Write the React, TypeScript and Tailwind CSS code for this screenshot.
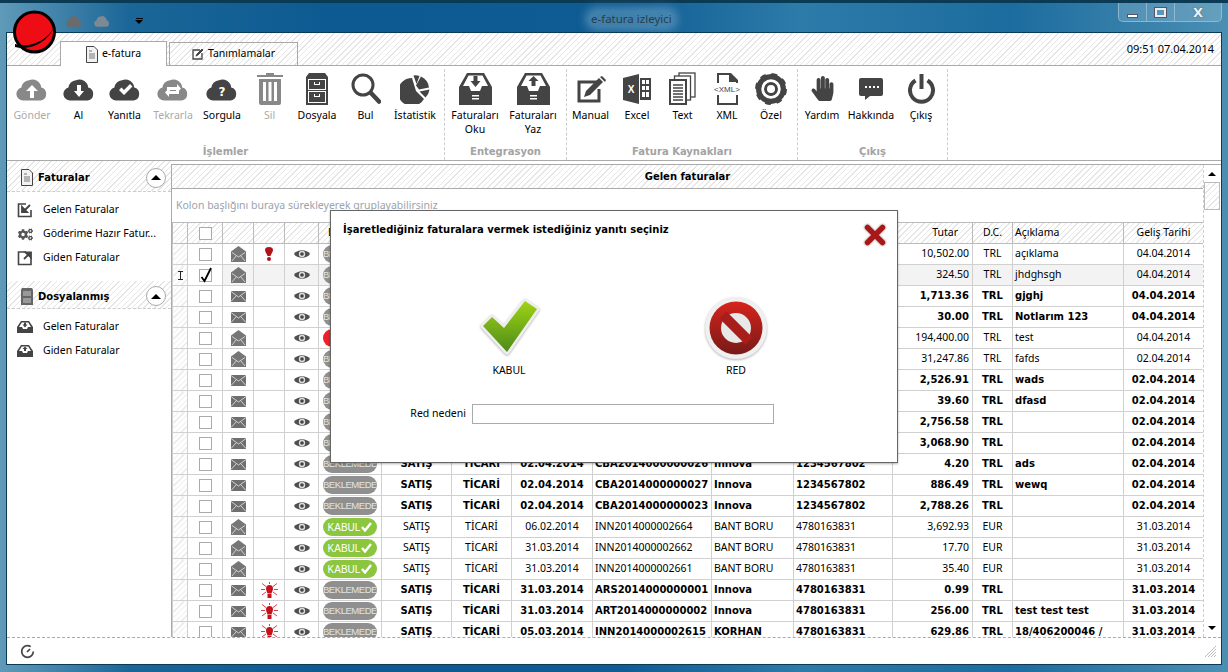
import type { ReactNode } from "react";
import { FaCogs, FaHandPaper } from "react-icons/fa";

const hatch =
  "bg-[repeating-linear-gradient(135deg,#ffffff_0px,#ffffff_3px,#e6e6e6_3px,#e6e6e6_4px)]";
const boldCell = "font-['DejaVu_Sans',sans-serif] font-bold text-[10px]";

type Icon = ReactNode;

function Cloud({ children, w = 32, h = 24 }: { children?: ReactNode; w?: number; h?: number }) {
  return (
    <svg width={w} height={h} viewBox="0 0 32 24" fill="currentColor">
      <path d="M7 23.5a6.600 6.600 0 0 1-1.600-13A8.200 8.200 0 0 1 13 3.200 8.500 8.500 0 0 1 23.500 6a7 7 0 0 1 1.700 4.600 6.600 6.600 0 0 1-.5 12.900z" />
      {children}
    </svg>
  );
}

const ArrowUpGlyph = <path d="M16 8l6 6h-4v7h-4v-7h-4z" fill="#fff" />;
const ArrowDownGlyph = <path d="M14 8h4v6h3l-5 6-5-6h3z" fill="#fff" />;

function Trash() {
  return (
    <svg width="28" height="32" viewBox="0 0 28 32" fill="currentColor">
      <path d="M10 0h8v2h9v2H1V2h9z" />
      <path fillRule="evenodd" d="M3 6h22v24a2 2 0 0 1-2 2H5a2 2 0 0 1-2-2zM7 9v19h3V9zm5.500 0v19h3V9zM18 9v19h3V9z" />
    </svg>
  );
}

function Cabinet() {
  return (
    <svg width="24" height="32" viewBox="0 0 24 32" fill="currentColor">
      <path d="M4 0h16l3 4v28H1V4z" />
      <rect x="3" y="6" width="18" height="11" fill="#fff" />
      <rect x="4" y="7" width="16" height="9" />
      <rect x="3" y="18" width="18" height="12" fill="#fff" />
      <rect x="4" y="19" width="16" height="10" />
      <path d="M9 9v3h6V9h-1v2h-4V9zM9 21v3h6v-3h-1v2h-4v-2z" fill="#fff" />
    </svg>
  );
}

function Magnifier() {
  return (
    <svg width="30" height="31" viewBox="0 0 30 31" fill="none" stroke="currentColor">
      <circle cx="12" cy="12" r="10" strokeWidth="3" />
      <path d="M20 20l8 8.500" strokeWidth="4.500" strokeLinecap="round" />
    </svg>
  );
}

function Pie() {
  return (
    <svg width="30" height="30" viewBox="0 0 30 30" fill="currentColor">
      <path d="M12 4l4 13 8 8A14 14 0 1 1 12 4z" />
      <path d="M13.500 1.500a14 14 0 0 1 6 .5l-3 8z" />
      <path d="M21 2.500a14 14 0 0 1 8 11l-10 2-3-4z" />
      <path d="M29.500 15.500a14 14 0 0 1-4 8l-6-6z" />
    </svg>
  );
}

function Tray({ up }: { up?: boolean }) {
  return (
    <svg width="33" height="32" viewBox="0 0 33 32" fill="currentColor">
      <path fillRule="evenodd" d="M8 0h17l8 14v18H0V14zM9.500 2.500L4 13h6l2 5h9l2-5h6L23.500 2.500z" />
      <rect x="13" y="22" width="7" height="1.500" fill="#fff" />
      <rect x="13" y="25" width="7" height="1.500" fill="#fff" />
      {up ? <path d="M16.500 3l5 5h-3v5h-4V8h-3z" /> : <path d="M14.500 3h4v5h3l-5 6-5-6h3z" />}
    </svg>
  );
}

function ManualIcon() {
  return (
    <svg width="32" height="28" viewBox="0 0 32 28" fill="none" stroke="currentColor">
      <path d="M22 7H4v19h20V14" strokeWidth="3" />
      <path d="M9 22l2-6L24 3l4 4-13 13z" fill="currentColor" stroke="none" />
      <path d="M25 2l2-1 4 4-1 2z" fill="currentColor" stroke="none" />
    </svg>
  );
}

function ExcelIcon() {
  return (
    <svg width="28" height="30" viewBox="0 0 28 30" fill="currentColor">
      <path d="M0 4l16-4v30L0 26z" />
      <text x="8" y="19" fill="#fff" fontSize="10" fontWeight="700" textAnchor="middle" fontFamily="Liberation Sans">X</text>
      <path fillRule="evenodd" d="M17 4h11v22H17zm2 2v4h3V6zm4 0v4h3V6zm-4 6v4h3v-4zm4 0v4h3v-4zm-4 6v5h3v-5zm4 0v5h3v-5z" />
    </svg>
  );
}

function TextIcon() {
  return (
    <svg width="27" height="33" viewBox="0 0 27 33" fill="#fff" stroke="currentColor" strokeWidth="1.300">
      <rect x="10" y="1" width="16" height="24" />
      <rect x="5.500" y="4" width="16" height="24" />
      <rect x="1" y="8" width="16" height="24" strokeWidth="2" />
      <path d="M4 13h10M4 16h10M4 19h10M4 22h10M4 25h10M4 28h10" strokeWidth="1.400" />
    </svg>
  );
}

function XmlIcon() {
  return (
    <svg width="26" height="32" viewBox="0 0 26 32" fill="currentColor">
      <path fillRule="evenodd" d="M3 0h14l7 7v25H3zm2 2v28h17V9h-7V2z" />
      <rect x="0" y="10" width="26" height="12" fill="#fff" />
      <text x="13" y="19" fontSize="8" textAnchor="middle" fontFamily="Liberation Sans">{"<XML>"}</text>
    </svg>
  );
}

function Gear() {
  return (
    <svg width="32" height="32" viewBox="0 0 32 32" fill="none" stroke="currentColor">
      <circle cx="16" cy="16" r="12" strokeWidth="6" />
      <circle cx="16" cy="16" r="14" strokeWidth="4" strokeDasharray="5.500 5.500" />
      <circle cx="16" cy="16" r="5.500" strokeWidth="3" />
      <circle cx="16" cy="16" r="8.500" stroke="#fff" strokeWidth="2.500" />
    </svg>
  );
}

function Bubble() {
  return (
    <svg width="24" height="22" viewBox="0 0 24 22" fill="currentColor">
      <path d="M2 0h20a2 2 0 0 1 2 2v14a2 2 0 0 1-2 2H11l-5 4v-4H2a2 2 0 0 1-2-2V2a2 2 0 0 1 2-2z" />
      <path d="M6 8h2v2H6zM10 8h2v2h-2zM14 8h2v2h-2zM18 8h2v2h-2z" fill="#fff" />
    </svg>
  );
}

function Power() {
  return (
    <svg width="27" height="30" viewBox="0 0 27 30" fill="none" stroke="currentColor" strokeWidth="4">
      <path d="M13.500 0v15" />
      <path d="M7.500 6.500a11.500 11.500 0 1 0 12 0" />
    </svg>
  );
}

function DocIcon() {
  return (
    <svg width="12" height="17" viewBox="0 0 12 17" fill="none" stroke="#444" strokeWidth="1">
      <path d="M1 .5h7L11.500 4v12.500H.5V.5z" fill="#f2f2f2" />
      <path d="M3 5h3M3 8h6M3 10h6M3 12h6" stroke="#777" />
    </svg>
  );
}

function SmallCabinet() {
  return (
    <svg width="12" height="17" viewBox="0 0 12 17" fill="#666">
      <path d="M1 0h10l1 2v15H0V2z" />
      <rect x="2" y="3" width="8" height="5" fill="#999" />
      <rect x="2" y="10" width="8" height="5" fill="#999" />
    </svg>
  );
}

function InOutBox({ out }: { out?: boolean }) {
  return (
    <svg width="16" height="16" viewBox="0 0 16 16" fill="none" stroke="#444">
      <path d="M9 2H1.500v12.500H14V8" strokeWidth="1.600" />
      {out ? (
        <path d="M7 9l5-5M8.500 2.500h5.500v5z" fill="#444" strokeWidth="1.800" />
      ) : (
        <path d="M13 3L8 8M5 5v5h5z" fill="#444" strokeWidth="1.800" />
      )}
    </svg>
  );
}

function SmallTray({ up }: { up?: boolean }) {
  return (
    <svg width="16" height="12" viewBox="0 0 16 12" fill="#444">
      <path fillRule="evenodd" d="M4 0h8l4 6v6H0V6zm.800 1.500L2 6h3l1 2h4l1-2h3l-2.800-4.500z" />
      {up ? <path d="M8 1.500L10.500 4H9v2H7V4H5.500z" /> : <path d="M7 1.500h2v2h1.500L8 6.500 5.500 3.500H7z" />}
    </svg>
  );
}

function CollapseButton() {
  return (
    <span className="flex h-[20px] w-[20px] items-center justify-center rounded-full border border-[#aaa] bg-white">
      <span className="h-0 w-0 border-x-[5px] border-b-[5px] border-x-transparent border-b-black" />
    </span>
  );
}

function ClosedEnvelope() {
  return (
    <svg width="15" height="11" viewBox="0 0 15 11">
      <rect width="15" height="11" fill="#6f6f6f" />
      <path d="M0 .5L7.500 6 15 .5M0 10.500L5.500 4.500M15 10.500L9.500 4.500" fill="none" stroke="#d0d0d0" strokeWidth="1" />
    </svg>
  );
}

function OpenEnvelope() {
  return (
    <svg width="15" height="16" viewBox="0 0 15 16">
      <path d="M7.500 0L15 5.500V16H0V5.500z" fill="#767676" />
      <path d="M1 6.500L7.500 11 14 6.500M1 15l4.500-5.500M14 15L9.500 9.500" fill="none" stroke="#d0d0d0" />
    </svg>
  );
}

function Eye() {
  return (
    <svg width="16" height="10" viewBox="0 0 16 10">
      <path d="M0 5C3 0 13 0 16 5c-3 5-13 5-16 0z" fill="#4f4f4f" />
      <circle cx="8" cy="5" r="3.200" fill="#ddd" />
      <circle cx="8" cy="5" r="1.800" fill="#444" />
    </svg>
  );
}

function Alert() {
  return (
    <svg width="8" height="14" viewBox="0 0 8 14" fill="#b3141a">
      <path d="M0 3a4 3 0 0 1 8 0c0 2-2 4-2.500 6h-3C2 7 0 5 0 3z" />
      <circle cx="4" cy="12" r="2" />
    </svg>
  );
}

function Lamp() {
  return (
    <svg width="17" height="17" viewBox="0 0 17 17" fill="#c8101a" stroke="#d2444c">
      <path d="M8.500 0v2M1 1.500l4 3M16 1.500l-4 3M0 7.500h4M13 7.500h4M1 13l4-3M16 13l-4-3" strokeWidth="1" />
      <path d="M5 6.500a3.500 3.500 0 0 1 7 0c0 1.800-1 3-1.500 5h-4C6 9.500 5 8.300 5 6.500z" stroke="none" />
      <rect x="6.500" y="12" width="4" height="4" stroke="none" />
    </svg>
  );
}

function CheckBoxCell({ checked }: { checked?: boolean }) {
  return (
    <span className="relative mx-auto block h-[13px] w-[13px] border border-[#aaa] bg-white">
      {checked && (
        <svg className="absolute -top-[3px] left-0" width="13" height="16" viewBox="0 0 13 16" fill="none" stroke="#000" strokeWidth="1.800">
          <path d="M1.500 10l3 4 6.500-13" />
        </svg>
      )}
    </span>
  );
}

function StatusPill({ status }: { status: string }) {
  if (status === "KABUL") {
    return (
      <span className="mx-auto flex h-[18px] w-[54px] items-center justify-center gap-[1px] rounded-full bg-[#8cc63f] font-['Liberation_Sans',sans-serif] text-[10px] text-white">
        KABUL
        <svg width="11" height="10" viewBox="0 0 11 10" fill="none" stroke="#fff" strokeWidth="2.400">
          <path d="M1 5l3 3.500L10 1" />
        </svg>
      </span>
    );
  }
  if (status === "RED") {
    return <span className="mx-auto block h-[18px] w-[54px] rounded-full bg-[#ee2028]" />;
  }
  return (
    <span className="mx-auto flex h-[18px] w-[54px] items-center justify-center overflow-hidden rounded-full bg-[#8f8f8f] font-['Liberation_Sans',sans-serif] text-[9.5px] font-normal tracking-[-0.45px] text-[#e4e4e4]">
      BEKLEMEDE
    </span>
  );
}

type Row = {
  open?: boolean;
  bold?: boolean;
  flag?: "alert" | "lamp";
  checked?: boolean;
  status: string;
  values: string[];
};

const blank = ["", "", "", "", "", ""];

const rows: Row[] = [
  { open: true, flag: "alert", status: "BEKLEMEDE", values: [...blank, "10,502.00", "TRL", "açıklama", "04.04.2014"] },
  { open: true, checked: true, status: "BEKLEMEDE", values: [...blank, "324.50", "TRL", "jhdghsgh", "04.04.2014"] },
  { bold: true, status: "BEKLEMEDE", values: [...blank, "1,713.36", "TRL", "gjghj", "04.04.2014"] },
  { bold: true, status: "BEKLEMEDE", values: [...blank, "30.00", "TRL", "Notlarım 123", "04.04.2014"] },
  { open: true, status: "RED", values: [...blank, "194,400.00", "TRL", "test", "04.04.2014"] },
  { open: true, status: "BEKLEMEDE", values: [...blank, "31,247.86", "TRL", "fafds", "02.04.2014"] },
  { bold: true, status: "BEKLEMEDE", values: [...blank, "2,526.91", "TRL", "wads", "02.04.2014"] },
  { bold: true, status: "BEKLEMEDE", values: [...blank, "39.60", "TRL", "dfasd", "02.04.2014"] },
  { bold: true, status: "BEKLEMEDE", values: [...blank, "2,756.58", "TRL", "", "02.04.2014"] },
  { bold: true, status: "BEKLEMEDE", values: [...blank, "3,068.90", "TRL", "", "02.04.2014"] },
  { bold: true, status: "BEKLEMEDE", values: ["SATIŞ", "TİCARİ", "02.04.2014", "CBA2014000000026", "Innova", "1234567802", "4.20", "TRL", "ads", "02.04.2014"] },
  { bold: true, status: "BEKLEMEDE", values: ["SATIŞ", "TİCARİ", "02.04.2014", "CBA2014000000027", "Innova", "1234567802", "886.49", "TRL", "wewq", "02.04.2014"] },
  { bold: true, status: "BEKLEMEDE", values: ["SATIŞ", "TİCARİ", "02.04.2014", "CBA2014000000023", "Innova", "1234567802", "2,788.26", "TRL", "", "02.04.2014"] },
  { open: true, status: "KABUL", values: ["SATIŞ", "TİCARİ", "06.02.2014", "INN2014000002664", "BANT BORU", "4780163831", "3,692.93", "EUR", "", "31.03.2014"] },
  { open: true, status: "KABUL", values: ["SATIŞ", "TİCARİ", "31.03.2014", "INN2014000002662", "BANT BORU", "4780163831", "17.70", "EUR", "", "31.03.2014"] },
  { open: true, status: "KABUL", values: ["SATIŞ", "TİCARİ", "31.03.2014", "INN2014000002661", "BANT BORU", "4780163831", "35.40", "EUR", "", "31.03.2014"] },
  { bold: true, flag: "lamp", status: "BEKLEMEDE", values: ["SATIŞ", "TİCARİ", "31.03.2014", "ARS2014000000001", "Innova", "4780163831", "0.99", "TRL", "", "31.03.2014"] },
  { bold: true, flag: "lamp", status: "BEKLEMEDE", values: ["SATIŞ", "TİCARİ", "31.03.2014", "ART2014000000002", "Innova", "4780163831", "256.00", "TRL", "test test test", "31.03.2014"] },
  { bold: true, flag: "lamp", status: "BEKLEMEDE", values: ["SATIŞ", "TİCARİ", "05.03.2014", "INN2014000002615", "KORHAN", "4780163831", "629.86", "TRL", "18/406200046 /", "31.03.2014"] },
];

const valueAlign = [
  "text-center",
  "text-center",
  "text-center",
  "pl-[2px]",
  "pl-[2px]",
  "pl-[2px]",
  "text-right pr-[3px]",
  "text-center",
  "pl-[2px]",
  "text-center",
];

const colWidths = ["w-[15px]", "w-[35px]", "w-[31px]", "w-[31px]", "w-[34px]", "w-[63px]", "w-[70px]", "w-[60px]", "w-[81px]", "w-[119px]", "w-[82px]", "w-[99px]", "w-[80px]", "w-[40px]", "w-[111px]", "w-[80px]"];

function RibbonButton({ icon, label, width, off }: { icon: Icon; label: string; width: string; off?: boolean }) {
  return (
    <div className={`flex shrink-0 flex-col items-center ${width} ${off ? "text-[#888]" : "text-[#444]"}`}>
      <div className="flex h-[39px] items-center justify-center">{icon}</div>
      <div className={`text-center leading-[14px] whitespace-pre-line ${off ? "text-[#aaa]" : "text-black"}`}>{label}</div>
    </div>
  );
}

function RibbonGroup({ title, width, children }: { title: string; width: string; children: ReactNode }) {
  return (
    <div className={`flex shrink-0 flex-col border-r border-dashed border-[#ccc] ${width}`}>
      <div className="flex flex-1">{children}</div>
      <div className={`pb-[1px] text-center leading-[14px] text-[#a3a3a3] ${boldCell}`}>{title}</div>
    </div>
  );
}

function SideItem({ icon, label }: { icon: Icon; label: string }) {
  return (
    <div className="flex h-[24px] items-center">
      <div className="flex w-[36px] justify-center">{icon}</div>
      <span className="truncate">{label}</span>
    </div>
  );
}

function SideHeader({ icon, label, height }: { icon: Icon; label: string; height: string }) {
  return (
    <div className={`flex shrink-0 items-center border-b border-dashed border-[#ccc] pl-[14px] pr-[5px] pt-[3px] ${height} ${hatch}`}>
      {icon}
      <span className={`ml-[5px] flex-1 ${boldCell}`}>{label}</span>
      <CollapseButton />
    </div>
  );
}

export default function App() {
  return (
    <div className="relative flex h-[672px] w-[1228px] flex-col overflow-hidden bg-[linear-gradient(90deg,#5f9ab8_0px,#1a6698_130px,#0d5a92_330px,#0f5c94_620px,#2d7ba9_800px,#1c6c9f_1010px,#4b8fb3_1228px)] font-['Noto_Sans',sans-serif] text-[10.5px] text-black">
      {/* title bar */}
      <div className="flex h-[32px] shrink-0 items-start border-t-[3px] border-[#0b3a55] pl-[66px] pr-[6px]">
        <div className="mt-[12px] flex items-center">
          <span className="w-[28px] text-[#6b6b6b]"><Cloud w={16} h={12} /></span>
          <span className="w-[41px] text-[#7d8a93]"><Cloud w={16} h={12} /></span>
          <span className="flex flex-col items-center gap-[1px]">
            <span className="h-[1px] w-[7px] bg-black" />
            <span className="h-0 w-0 border-x-[4px] border-t-[4px] border-x-transparent border-t-black" />
          </span>
        </div>
        <div className="ml-[446px] mt-[8px] rounded-full bg-[#6ea3c4]/50 px-[2px] text-[11.5px] leading-[16px] text-[#2e3c48] shadow-[0_0_8px_4px_rgba(130,175,205,0.5)]">e-fatura izleyici</div>
        <div className="ml-auto flex h-[19px] rounded-b-[5px] border border-t-0 border-[#a5c5d8]/70 bg-white/15">
          <span className="flex w-[28px] items-end justify-center border-r border-[#a5c5d8]/70 pb-[3px]">
            <span className="h-[4px] w-[11px] border border-[#556] bg-white" />
          </span>
          <span className="flex w-[28px] items-center justify-center border-r border-[#a5c5d8]/70">
            <span className="h-[9px] w-[11px] border-2 border-[#e8eef3] outline outline-[#556]" />
          </span>
          <span className="flex w-[46px] items-center justify-center font-['DejaVu_Sans',sans-serif] text-[13px] font-bold leading-none text-[#eef3f6] [text-shadow:0_0_1px_#334]">X</span>
        </div>
      </div>

      {/* client area */}
      <div className="mx-[6px] mb-[7px] flex min-h-0 flex-1 flex-col border border-[#0b3a55] bg-white">
        <div className={`flex h-[33px] shrink-0 items-end border-b border-[#aaa] pl-[53px] pr-[7px] ${hatch}`}>
          <div className="-mb-[1px] flex h-[25px] w-[107px] items-center justify-center gap-[4px] border border-b-0 border-[#aaa] bg-white">
            <DocIcon />
            <span>e-fatura</span>
          </div>
          <div className={`ml-[2px] flex h-[23px] w-[129px] items-center justify-center gap-[4px] border border-b-0 border-[#aaa] ${hatch}`}>
            <svg width="12" height="12" viewBox="0 0 12 12" fill="none" stroke="#444">
              <path d="M8 2H1v9h9V5" strokeWidth="1.300" />
              <path d="M4 8l1-2 5-5 1 1-5 5z" fill="#444" />
            </svg>
            <span>Tanımlamalar</span>
          </div>
          <span className="mb-[9px] ml-auto text-[11px] leading-[14px]">09:51 07.04.2014</span>
        </div>

        {/* ribbon */}
        <div className="flex h-[95px] shrink-0 border-b border-[#aaa] pt-[3px]">
          <RibbonGroup title="İşlemler" width="w-[438px]">
            <span className="w-[1px]" />
            <RibbonButton width="w-[48px]" label="Gönder" off icon={<Cloud>{ArrowUpGlyph}</Cloud>} />
            <RibbonButton width="w-[45px]" label="Al" icon={<Cloud>{ArrowDownGlyph}</Cloud>} />
            <RibbonButton width="w-[47px]" label="Yanıtla" icon={<Cloud><path d="M10 13l2.500-2.500 2.500 2.500 6-6 2.500 2.500-8.500 8.500z" fill="#fff" /></Cloud>} />
            <RibbonButton width="w-[50px]" label="Tekrarla" off icon={<Cloud><path d="M10 10h10V7l4 4.500-4 4.500v-3h-7v2h-3zM22 17H12v3l-4-4.500L12 11v3h7v-2h3z" fill="#fff" /></Cloud>} />
            <RibbonButton width="w-[48px]" label="Sorgula" icon={<Cloud><text x="16" y="19" fill="#fff" fontSize="12" fontWeight="700" textAnchor="middle" fontFamily="DejaVu Sans">?</text></Cloud>} />
            <RibbonButton width="w-[47px]" label="Sil" off icon={<Trash />} />
            <RibbonButton width="w-[48px]" label="Dosyala" icon={<Cabinet />} />
            <RibbonButton width="w-[49px]" label="Bul" icon={<Magnifier />} />
            <RibbonButton width="w-[50px]" label="İstatistik" icon={<Pie />} />
          </RibbonGroup>
          <RibbonGroup title="Entegrasyon" width="w-[122px]">
            <span className="w-[1px]" />
            <RibbonButton width="w-[58px]" label={"Faturaları\nOku"} icon={<Tray />} />
            <RibbonButton width="w-[58px]" label={"Faturaları\nYaz"} icon={<Tray up />} />
          </RibbonGroup>
          <RibbonGroup title="Fatura Kaynakları" width="w-[231px]">
            <RibbonButton width="w-[47px]" label="Manual" icon={<ManualIcon />} />
            <RibbonButton width="w-[46px]" label="Excel" icon={<ExcelIcon />} />
            <RibbonButton width="w-[45px]" label="Text" icon={<TextIcon />} />
            <RibbonButton width="w-[44px]" label="XML" icon={<XmlIcon />} />
            <RibbonButton width="w-[44px]" label="Özel" icon={<Gear />} />
          </RibbonGroup>
          <RibbonGroup title="Çıkış" width="w-[150px]">
            <RibbonButton width="w-[48px]" label="Yardım" icon={<FaHandPaper size={25} />} />
            <RibbonButton width="w-[50px]" label="Hakkında" icon={<Bubble />} />
            <RibbonButton width="w-[50px]" label="Çıkış" icon={<Power />} />
          </RibbonGroup>
        </div>

        {/* sidebar and grid */}
        <div className="flex min-h-0 flex-1">
          <aside className="flex w-[164px] shrink-0 flex-col">
            <SideHeader height="h-[31px]" icon={<DocIcon />} label="Faturalar" />
            <div className="mt-[6px]">
              <SideItem icon={<InOutBox />} label="Gelen Faturalar" />
              <SideItem icon={<FaCogs size={15} className="text-[#555]" />} label="Göderime Hazır Fatur..." />
              <SideItem icon={<InOutBox out />} label="Giden Faturalar" />
            </div>
            <div className="mt-[11px]">
              <SideHeader height="h-[28px]" icon={<SmallCabinet />} label="Dosyalanmış" />
            </div>
            <div className="mt-[6px]">
              <SideItem icon={<SmallTray />} label="Gelen Faturalar" />
              <SideItem icon={<SmallTray up />} label="Giden Faturalar" />
            </div>
          </aside>

          <main className="mt-[3px] flex min-w-0 flex-1 flex-col border-l border-t border-[#aaa]">
            <div className="flex min-h-0 flex-1">
              <div className="flex w-[1031px] shrink-0 flex-col">
                <div className={`flex h-[24px] shrink-0 items-center justify-center border-b border-[#aaa] ${boldCell} ${hatch}`}>Gelen faturalar</div>
                <div className="flex h-[33px] shrink-0 items-center pl-[4px] text-[#9aa3ad]">Kolon başlığını buraya sürekleyerek gruplayabilirsiniz</div>
                <div className="min-h-0 flex-1 overflow-hidden">
                  <table className="w-[1031px] table-fixed border-collapse">
                    <colgroup>
                      {colWidths.map((w, i) => (
                        <col key={i} className={w} />
                      ))}
                    </colgroup>
                    <thead>
                      <tr className={`h-[21px] ${hatch}`}>
                        {["", "", "", "", "", "Durum", "", "", "", "", "", "", "Tutar", "D.C.", "Açıklama", "Geliş Tarihi"].map((h, i) => (
                          <th
                            key={i}
                            className={`overflow-hidden border border-[#bbb] p-0 font-normal ${
                              i === 1 ? "" : i === 5 ? "pl-[9px] text-left" : i === 12 ? "pr-[14px] text-right" : i === 14 ? "pl-[2px] text-left" : "text-center"
                            }`}
                          >
                            {i === 1 ? <CheckBoxCell /> : h}
                          </th>
                        ))}
                      </tr>
                    </thead>
                    <tbody>
                      {rows.map((r, i) => (
                        <tr key={i} className={`h-[21px] ${r.checked ? "bg-[#f3f3f3]" : ""} ${r.bold ? boldCell : ""}`}>
                          <td className={`border border-[#d0d0d0] p-0 ${hatch}`}>
                            {r.checked && (
                              <svg className="mx-auto" width="5" height="9" viewBox="0 0 5 9" fill="none" stroke="#222">
                                <path d="M0 .5h5M0 8.500h5M2.500 .5v8" />
                              </svg>
                            )}
                          </td>
                          <td className="border border-[#d0d0d0] bg-white p-0">
                            <CheckBoxCell checked={r.checked} />
                          </td>
                          <td className="border border-[#d0d0d0] p-0">
                            <span className="flex justify-center">{r.open ? <OpenEnvelope /> : <ClosedEnvelope />}</span>
                          </td>
                          <td className="border border-[#d0d0d0] p-0">
                            <span className="flex justify-center">
                              {r.flag === "alert" && <Alert />}
                              {r.flag === "lamp" && <Lamp />}
                            </span>
                          </td>
                          <td className="border border-[#d0d0d0] p-0">
                            <span className="flex justify-center">
                              <Eye />
                            </span>
                          </td>
                          <td className="border border-[#d0d0d0] p-0">
                            <StatusPill status={r.status} />
                          </td>
                          {r.values.map((v, j) => (
                            <td key={j} className={`overflow-hidden border border-[#d0d0d0] p-0 whitespace-nowrap ${r.bold ? "pb-[2px]" : ""} ${valueAlign[j]}`}>
                              {v}
                            </td>
                          ))}
                        </tr>
                      ))}
                    </tbody>
                  </table>
                </div>
              </div>

              {/* scrollbar */}
              <div className="flex w-[17px] shrink-0 flex-col items-center border-l border-dashed border-[#ccc]">
                <span className="mt-[7px] h-0 w-0 border-x-[4px] border-b-[4px] border-x-transparent border-b-black" />
                <span className={`mt-[6px] h-[28px] w-[16px] border border-[#bbb] ${hatch}`} />
                <span className="mt-auto mb-[7px] h-0 w-0 border-x-[4px] border-t-[4px] border-x-transparent border-t-black" />
              </div>
            </div>
          </main>
        </div>

        {/* status bar */}
        <div className="flex h-[27px] shrink-0 items-center justify-between border-t border-dashed border-[#aaa] pl-[13px] pr-[4px]">
          <svg width="15" height="15" viewBox="0 0 15 15" fill="none" stroke="#444" strokeWidth="1.700">
            <circle cx="7.500" cy="7.500" r="5.800" strokeDasharray="30 6" />
            <path d="M7 8l3-3" />
          </svg>
          <svg className="mr-[1px]" width="11" height="11" viewBox="0 0 11 11" stroke="#bbb">
            <path d="M11 0L0 11M11 3L3 11M11 6L6 11M11 9L9 11" />
          </svg>
        </div>
      </div>

      {/* logo */}
      <svg className="absolute left-[12px] top-[10px]" width="45" height="45" viewBox="0 0 45 45">
        <circle cx="22.500" cy="22" r="20" fill="#ee0d14" stroke="#000" strokeWidth="3" />
        <path d="M3 34c14 4 30-2 38-15-6 13-22 22-38 18z" fill="#000" />
      </svg>

      {/* reply dialog */}
      <div className="absolute left-[330px] top-[210px] h-[253px] w-[568px] border border-[#666] bg-white shadow-[0_1px_2px_rgba(0,0,0,0.3)]">
        <div className="relative pl-[12px] pt-[12px]">
          <div className={`leading-[14px] ${boldCell}`}>İşaretlediğiniz faturalara vermek istediğiniz yanıtı seçiniz</div>
          <svg className="absolute right-[9px] top-[11px]" width="26" height="26" viewBox="0 0 26 26" fill="none" strokeLinecap="round">
            <path d="M5.500 5.500l15 15M20.500 5.500l-15 15" stroke="#e4e4e4" strokeWidth="8.500" />
            <path d="M5.500 5.500l15 15M20.500 5.500l-15 15" stroke="#a81818" strokeWidth="5.500" />
          </svg>
        </div>

        <div className="mt-[58px] flex">
          <div className="ml-[128px] flex w-[100px] flex-col items-center">
            <svg width="66" height="66" viewBox="0 0 66 66" className="drop-shadow-[0_1px_1px_rgba(0,0,0,0.3)]">
              <defs>
                <linearGradient id="okgreen" x1="0" y1="0" x2="0" y2="1">
                  <stop offset="0" stopColor="#9fd414" />
                  <stop offset="1" stopColor="#4d8a1a" />
                </linearGradient>
              </defs>
              <path d="M7 31l9-9 12 11L49 6l12 8-30 43z" fill="url(#okgreen)" stroke="#eee" strokeWidth="5" strokeLinejoin="round" paintOrder="stroke" />
            </svg>
            <span className="mt-[2px] leading-[14px]">KABUL</span>
          </div>
          <div className="ml-[127px] flex w-[100px] flex-col items-center">
            <svg width="66" height="66" viewBox="0 0 66 66" className="drop-shadow-[0_1px_1px_rgba(0,0,0,0.3)]">
              <defs>
                <linearGradient id="nored" x1="0" y1="0" x2="0" y2="1">
                  <stop offset="0" stopColor="#d6241c" />
                  <stop offset="1" stopColor="#761a18" />
                </linearGradient>
              </defs>
              <circle cx="33" cy="33" r="31" fill="#f0f0f0" />
              <circle cx="33" cy="33" r="26.500" fill="url(#nored)" />
              <circle cx="33" cy="33" r="15" fill="#e8e8e8" />
              <path d="M20 20l26 26" stroke="#a81e1a" strokeWidth="10" />
            </svg>
            <span className="mt-[2px] leading-[14px]">RED</span>
          </div>
        </div>

        <div className="mt-[27px] flex items-center">
          <span className="w-[135px] text-right">Red nedeni</span>
          <input className="ml-[6px] h-[20px] w-[302px] border border-[#aaa] bg-white" readOnly aria-label="Red nedeni" />
        </div>
      </div>
    </div>
  );
}
